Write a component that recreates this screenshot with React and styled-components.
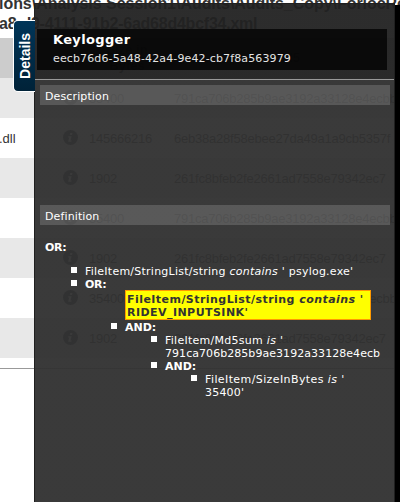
import React from "react";
import styled, { createGlobalStyle } from "styled-components";

const Global = createGlobalStyle`
  * { box-sizing: border-box; }
  body { margin: 0; background: #fff; overflow: hidden; }
`;

const Screen = styled.div`
  position: relative;
  width: 400px;
  height: 502px;
  overflow: hidden;
  background: #fff;
  font-family: "Liberation Sans", sans-serif;
  color: #333;
`;

const PathTitle = styled.div`
  display: flex;
  flex-direction: column;
  height: 38px;
  font-size: 16px;
  font-weight: bold;
  line-height: 20px;
  white-space: pre;
`;

const PathLine = styled.div`
  flex: none;
  height: 20px;
  margin-top: ${(p) => p.$top || 0}px;
  margin-left: ${(p) => p.$shift}px;
  letter-spacing: ${(p) => p.$track || 0}px;
`;

const Table = styled.div`
  height: 331px;
  border-bottom: 1px solid #999;
`;

const Row = styled.div`
  display: grid;
  grid-template-columns: 63px 26px 85px 1fr;
  align-items: center;
  height: 40px;
  font-size: 13px;
  white-space: nowrap;
  background: ${(p) => (p.$head ? "#ccc" : p.$shaded ? "#e8e8e8" : "#fff")};
`;

const HeadCell = styled.div`
  font-weight: bold;
  line-height: 16px;
  text-align: center;
  padding-right: ${(p) => p.$right || 0}px;
`;

const Value = styled.div`
  letter-spacing: -0.23px;
`;

const FileName = styled.div`
  margin-left: -2px;
  padding-left: 1px;
`;

const Drawer = styled.aside`
  position: absolute;
  left: 34px;
  top: 3px;
  width: 361px;
  height: 499px;
  border: 1px solid #202020;
  border-width: 1px 1px 0 1px;
  background: linear-gradient(rgba(33, 33, 33, 0.95) 75px, rgba(49, 49, 49, 0.955) 75px);
  font-family: Verdana, "DejaVu Sans", sans-serif;
  font-size: 11px;
  line-height: 13px;
  color: #fff;
`;

const Edge = styled.div`
  position: absolute;
  left: 395px;
  top: 5px;
  width: 5px;
  height: 497px;
  background: #000;
`;

const Tab = styled.div`
  position: absolute;
  left: 13px;
  top: 20px;
  width: 22px;
  height: 72px;
  display: flex;
  align-items: center;
  justify-content: center;
  border: 1px solid #fff;
  border-right: 0;
  border-radius: 5px 0 0 5px;
  background: linear-gradient(#003558, #002238);
  color: #fff;
`;

const TabLabel = styled.span`
  writing-mode: vertical-rl;
  transform: rotate(180deg);
  font-size: 14px;
  font-weight: bold;
  line-height: 16px;
`;

const DrawerHead = styled.header`
  height: 76px;
  padding: 25px 7px 0 2px;
  border-bottom: 1px solid #999;
`;

const TitleBox = styled.div`
  height: 41px;
  padding: 2px 0 0 16px;
  background: rgba(0, 0, 0, 0.74);
`;

const Name = styled.div`
  font-size: 13px;
  font-weight: bold;
  line-height: 18px;
  letter-spacing: 0.35px;
`;

const Ident = styled.div`
  line-height: 19px;
  letter-spacing: 0.13px;
  color: #e4e4e4;
  white-space: nowrap;
`;

const SectionBar = styled.div`
  height: 20px;
  margin: ${(p) => p.$top}px 4px 0 5px;
  padding-left: 5px;
  line-height: 23px;
  letter-spacing: 0.12px;
  background: rgba(255, 255, 255, 0.16);
`;

const Tree = styled.div`
  padding: 16px 0 0 10px;
`;

const List = styled.ul`
  list-style: none;
  margin: ${(p) => p.$top || 0}px 0 0;
  padding: 0 0 0 40px;
`;

const Item = styled.li`
  &::before {
    content: "";
    float: left;
    width: 6px;
    height: 6px;
    margin: 2px 0 0 -14px;
    background: #fff;
  }
`;

const Hit = styled.li`
  width: 246px;
  height: 30px;
  margin: -1px 0 1px;
  padding: 2px 1px 0;
  border: 1px solid #f90;
  background: #ff0;
  color: #333;
  font-weight: bold;
`;

const Operator = styled.b`
  letter-spacing: ${(p) => p.$track || 0}px;
`;

const Condition = styled.div`
  white-space: pre;
  letter-spacing: ${(p) => p.$track || 0}px;
`;

const InfoIcon = () => (
  <svg width="16" height="16" viewBox="0 0 16 16">
    <circle cx="7.5" cy="7.5" r="7.5" fill="#333b47" />
    <path d="M7.2 3h2.3l-.5 2H6.8zM5.3 6.2h3.3l-1.1 4.3h1.2l-.4 1.3H5.1l1.1-4.3H5z" fill="#fff" />
  </svg>
);

const A = "791ca706b285b9ae3192a33128e4ecbb";
const B = "261fc8bfeb2fe2661ad7558e79342ec7";
const files = [
  ["", "35400", A],
  [".dll", "145666216", "6eb38a28f58ebee27da49a1a9cb5357f"],
  ["", "1902", B],
  ["", "35400", A],
  ["", "1902", B],
  ["", "35400", A],
  ["", "1902", B],
];

export default function App() {
  return (
    <Screen>
      <Global />
      <PathTitle>
        <PathLine $top={-6} $shift={-1} $track={-0.04}>{"ions\\Analysis Session1\\Audits\\Audits_Copy\\ForiocRe"}</PathLine>
        <PathLine $shift={-1} $track={-0.24}>a8-d9-4111-91b2-6ad68d4bcf34.xml</PathLine>
      </PathTitle>
      <Table>
        <Row $head>
          <span />
          <span />
          <HeadCell $right={9}>Size in<br />Bytes</HeadCell>
          <HeadCell>Md5</HeadCell>
        </Row>
        {files.map(([name, size, md5], i) => (
          <Row key={i} $shaded={i % 2 === 0}>
            <FileName>{name}</FileName>
            <InfoIcon />
            <Value>{size}</Value>
            <Value>{md5}</Value>
          </Row>
        ))}
      </Table>
      <Edge />
      <Drawer>
        <DrawerHead>
          <TitleBox>
            <Name>Keylogger</Name>
            <Ident>eecb76d6-5a48-42a4-9e42-cb7f8a563979</Ident>
          </TitleBox>
        </DrawerHead>
        <SectionBar $top={5}>Description</SectionBar>
        <SectionBar $top={100}>Definition</SectionBar>
        <Tree>
          <Operator $track={-0.3}>OR:</Operator>
          <List $top={11}>
            <Item><Condition $track={0.24}>FileItem/StringList/string <i>contains</i> ' psylog.exe'</Condition></Item>
            <Item>
              <Operator $track={-0.3}>OR:</Operator>
              <List>
                <Hit>
                  <Condition $track={0.45}>FileItem/StringList/string <i>contains</i> '</Condition>
                  <Condition $track={0.45}>RIDEV_INPUTSINK'</Condition>
                </Hit>
                <Item>
                  <Operator>AND:</Operator>
                  <List>
                    <Item>
                      <Condition $track={0.27}>FileItem/Md5sum <i>is</i> '</Condition>
                      <Condition $track={0.05}>791ca706b285b9ae3192a33128e4ecb</Condition>
                    </Item>
                    <Item>
                      <Operator>AND:</Operator>
                      <List>
                        <Item>
                          <Condition $track={0.4}>FileItem/SizeInBytes <i>is</i> '</Condition>
                          <Condition $track={0.2}>35400'</Condition>
                        </Item>
                      </List>
                    </Item>
                  </List>
                </Item>
              </List>
            </Item>
          </List>
        </Tree>
      </Drawer>
      <Tab><TabLabel>Details</TabLabel></Tab>
    </Screen>
  );
}
